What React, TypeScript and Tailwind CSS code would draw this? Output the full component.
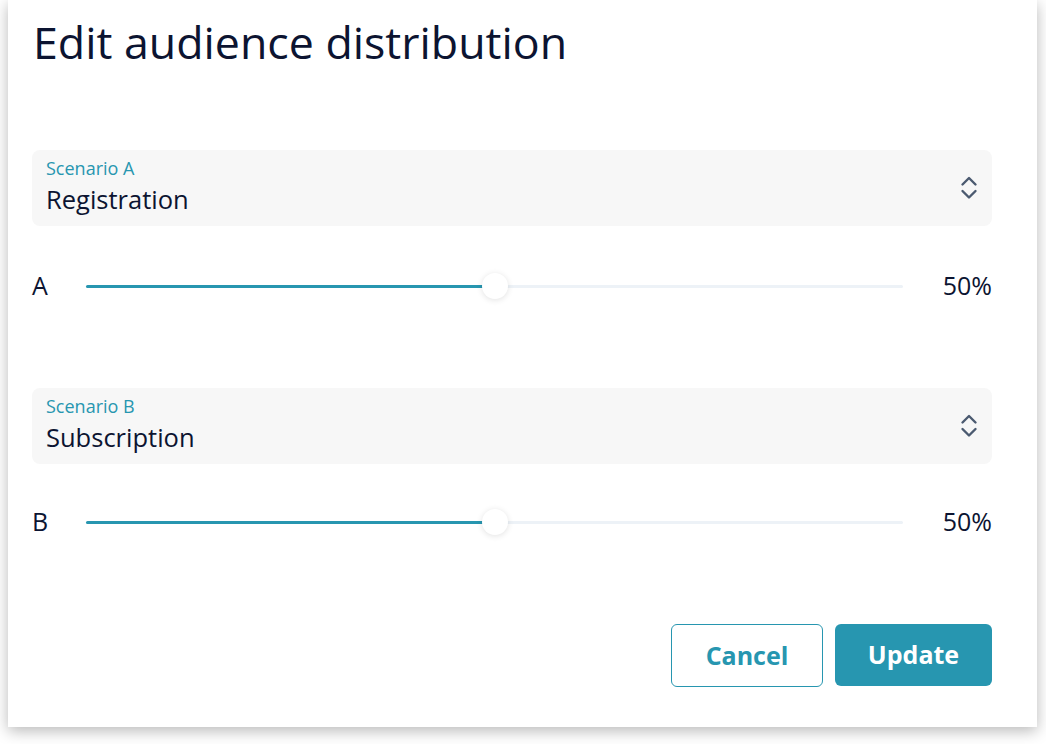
import React from 'react';

const Chevrons: React.FC = () => (
  <svg width="18" height="28" viewBox="0 0 18 28" fill="none" stroke="#4b5a70" strokeWidth="2.4" strokeLinecap="round" strokeLinejoin="round">
    <path d="M2.5 10.5l6.5-6.5 6.5 6.5" />
    <path d="M2.5 17l6.5 6.5 6.5-6.5" />
  </svg>
);

interface SelectProps {
  label: string;
  value: string;
}

const ScenarioSelect: React.FC<SelectProps> = ({ label, value }) => (
  <div className="h-[76px] rounded-[8px] bg-[#f7f7f7] pl-[14px] pr-[14px] flex items-start justify-between">
    <div className="flex flex-col pt-[7px]">
      <span className="text-[18px] leading-[22px] text-[#2796b0]">{label}</span>
      <span className="text-[25.5px] leading-[32px] text-[#0c1431] mt-[4px]">{value}</span>
    </div>
    <div className="self-center">
      <Chevrons />
    </div>
  </div>
);

interface SliderProps {
  label: string;
  value: number;
}

const Slider: React.FC<SliderProps> = ({ label, value }) => (
  <div className="flex items-center h-[28px]">
    <span className="w-[54px] text-[25px] text-[#0c1431]">{label}</span>
    <div className="relative flex-1 h-[3px] bg-[#edf2f7] rounded-full">
      <div className="h-full bg-[#2796b0] rounded-full" style={{ width: `${value}%` }} />
      <div
        className="absolute top-1/2 w-[26px] h-[26px] -translate-x-1/2 -translate-y-1/2 rounded-full bg-white shadow-[0_1px_6px_rgba(0,0,0,0.12)]"
        style={{ left: `${value}%` }}
      />
    </div>
    <span className="w-[89px] text-right text-[25px] text-[#0c1431]">{value}%</span>
  </div>
);

export default function App() {
  return (
    <div className="bg-white pl-[8px] pr-[9px] pb-[17px] font-['Open_Sans',sans-serif]">
      <div className="h-[727px] bg-white shadow-[0_4px_14px_rgba(0,0,0,0.28)] pl-[24px] pr-[45px] flex flex-col">
        <h1 className="pt-[16px] text-[44.7px] leading-[52px] text-[#0c1431] pl-[1px]">Edit audience distribution</h1>

        <div className="mt-[82px]">
          <ScenarioSelect label="Scenario A" value="Registration" />
        </div>
        <div className="mt-[46px]">
          <Slider label="A" value={50} />
        </div>

        <div className="mt-[88px]">
          <ScenarioSelect label="Scenario B" value="Subscription" />
        </div>
        <div className="mt-[44px]">
          <Slider label="B" value={50} />
        </div>

        <div className="mt-[88px] flex justify-end gap-[12px]">
          <button className="w-[152px] h-[63px] rounded-[6px] border border-[#2796b0] bg-white text-[25px] font-bold text-[#2796b0]">
            Cancel
          </button>
          <button className="w-[157px] h-[62px] rounded-[6px] bg-[#2796b0] text-[25px] font-bold text-white">
            Update
          </button>
        </div>
      </div>
    </div>
  );
}
